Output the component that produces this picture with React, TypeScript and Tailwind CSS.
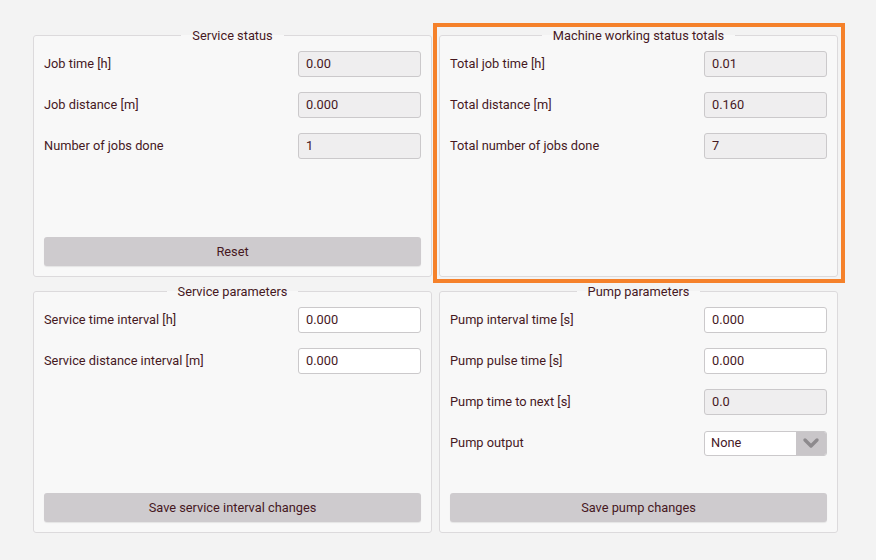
import React from "react";
import { ChevronDown } from "lucide-react";

type Field = {
  label: string;
  value: string;
  readOnly?: boolean;
  select?: boolean;
};

type PanelProps = {
  title: string;
  fields: Field[];
  action: string;
  highlight?: boolean;
};

const text = "text-[#46181f]";

function ValueBox({ field }: { field: Field }) {
  if (field.select) {
    return (
      <div className="flex h-[25px] w-[123px] overflow-hidden rounded-[3px] border border-[#cbc9cb] bg-white">
        <span className={`flex flex-1 items-center pl-[6px] text-[12.8px] ${text}`}>{field.value}</span>
        <span className="flex w-[30px] items-center justify-center bg-[#c9c6c9]">
          <ChevronDown size={24} strokeWidth={3.4} className="text-[#8d8a8d]" />
        </span>
      </div>
    );
  }
  return (
    <div
      className={`flex h-[26px] w-[123px] items-center rounded-[3px] border border-[#cbc9cb] pl-[7px] text-[12.8px] ${text} ${
        field.readOnly ? "bg-[#efeeef]" : "bg-white"
      }`}
    >
      {field.value}
    </div>
  );
}

function Panel({ title, fields, action, highlight }: PanelProps) {
  return (
    <div className="relative">
      <fieldset className="flex h-[250px] flex-col rounded-[3px] border border-[#dcdadc] bg-[#f8f8f8]">
        <legend className={`mx-auto px-[11px] text-[12.8px] leading-[17px] ${text}`}>{title}</legend>
        <div className="flex flex-1 flex-col px-[10px] pb-[10px] pt-[7px]">
          <div className="flex flex-col gap-[15px]">
            {fields.map((f) => (
              <div key={f.label} className="flex h-[26px] items-center justify-between">
                <span className={`text-[12.8px] ${text}`}>{f.label}</span>
                <ValueBox field={f} />
              </div>
            ))}
          </div>
          {action ? (
            <button
              className={`mt-auto h-[29px] w-full rounded-[3px] bg-[#cecbce] text-[12.8px] ${text} shadow-[0_1px_1px_rgba(0,0,0,0.08)]`}
            >
              {action}
            </button>
          ) : null}
        </div>
      </fieldset>
      {highlight ? (
        <div className="pointer-events-none absolute -bottom-[6px] -left-[6px] -right-[7px] -top-[4px] border-4 border-[#f5812a]" />
      ) : null}
    </div>
  );
}

export default function App() {
  return (
    <div
      className="h-[560px] w-[876px] overflow-hidden bg-[#f3f3f3] pl-[33px] pt-[27px]"
      style={{ fontFamily: "Roboto, 'Liberation Sans', sans-serif" }}
    >
      <div className="grid w-[805px] grid-cols-2 gap-x-[7px] gap-y-[6px]">
        <Panel
          title="Service status"
          action="Reset"
          fields={[
            { label: "Job time [h]", value: "0.00", readOnly: true },
            { label: "Job distance [m]", value: "0.000", readOnly: true },
            { label: "Number of jobs done", value: "1", readOnly: true },
          ]}
        />
        <Panel
          title="Machine working status totals"
          action=""
          highlight
          fields={[
            { label: "Total job time [h]", value: "0.01", readOnly: true },
            { label: "Total distance [m]", value: "0.160", readOnly: true },
            { label: "Total number of jobs done", value: "7", readOnly: true },
          ]}
        />
        <Panel
          title="Service parameters"
          action="Save service interval changes"
          fields={[
            { label: "Service time interval [h]", value: "0.000" },
            { label: "Service distance interval [m]", value: "0.000" },
          ]}
        />
        <Panel
          title="Pump parameters"
          action="Save pump changes"
          fields={[
            { label: "Pump interval time [s]", value: "0.000" },
            { label: "Pump pulse time [s]", value: "0.000" },
            { label: "Pump time to next [s]", value: "0.0", readOnly: true },
            { label: "Pump output", value: "None", select: true },
          ]}
        />
      </div>
    </div>
  );
}
